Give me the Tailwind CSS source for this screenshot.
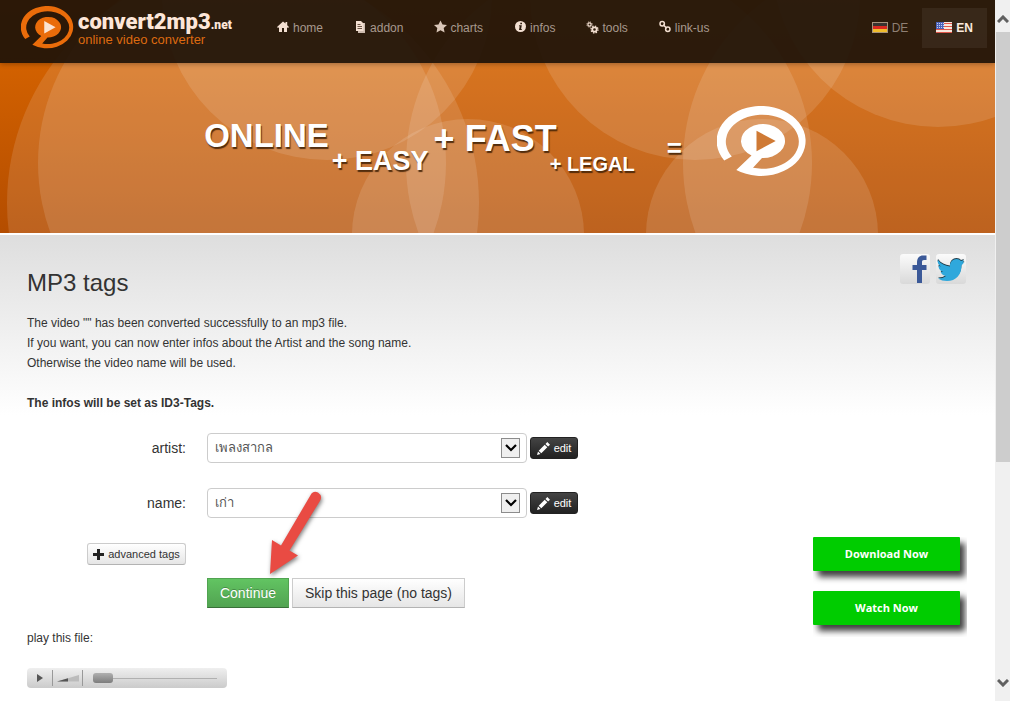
<!DOCTYPE html>
<html lang="en">

<head>
    <meta charset="UTF-8" />
    <meta name="viewport" content="width=device-width, initial-scale=1.0" />
    <title>convert2mp3.net - online video converter</title>
    <script src="https://cdn.jsdelivr.net/npm/@tailwindcss/browser@4"></script>
</head>

<body class="flex min-h-screen bg-white font-['Liberation_Sans',Arial,sans-serif] text-xs leading-5 text-[#333]">
    <!-- shared logo shapes -->
    <svg class="hidden">
        <symbol id="logo" viewBox="0 0 90 71" preserveAspectRatio="none">
            <path d="M7.2 54.5A44.5 35 0 1 1 19.3 64L34.5 49.5A22 17 0 1 1 45 52L36 61.8A36.5 27 0 1 0 14.8 50.5Z" fill="currentColor" />
        </symbol>
    </svg>

    <div class="min-w-0 flex-1">
        <div class="relative overflow-hidden bg-linear-to-b from-[#de6900] to-[#b44d00]">
            <!-- bubbles behind header and banner -->
            <svg class="absolute left-0 top-0" width="1100" height="233" viewBox="0 0 1100 233" fill="#fff" fill-opacity=".12">
                <circle cx="243" cy="203" r="236" />
                <circle cx="242" cy="163" r="204" />
                <circle cx="327" cy="-5" r="165" />
                <circle cx="468" cy="235" r="116" />
                <circle cx="609" cy="163" r="203" />
                <circle cx="695" cy="-5" r="165" />
                <circle cx="762" cy="235" r="116" />
                <circle cx="886" cy="163" r="203" />
                <circle cx="938" cy="-39" r="166" />
            </svg>

            <header class="relative flex h-[63px] items-start bg-[#1c1108]/92 pl-[21px] pr-2 shadow-[0_1px_5px_rgba(0,0,0,0.3)]">
                <a href="#" class="mt-1.5 flex w-[212px] shrink-0 gap-1">
                    <svg class="h-[43px] w-[53px] shrink-0 text-[#ea6c0a]" viewBox="0 0 90 71" preserveAspectRatio="none">
                        <use href="#logo" width="90" height="71" />
                        <path d="M39.5 24.7L58.7 35L39.5 45.3Z" fill="#fbe3d2" />
                    </svg>
                    <span class="flex flex-col whitespace-nowrap pt-1">
                        <span class="font-[Roboto,'Liberation_Sans',sans-serif] text-[22px] leading-6 font-black text-[#fde6d8]">convert2mp3<span class="text-xs">.net</span></span>
                        <span class="text-[13px] leading-3 text-[#dd6a10]">online video converter</span>
                    </span>
                </a>

                <nav class="ml-11 flex gap-[31px] pt-[18px] text-[#a8998e]">
                    <a href="#" class="flex gap-0.5">
                        <svg class="mt-px size-3.5" viewBox="0 0 14 14" fill="#f3dfd1"><path d="M6 2.5L0 8l1 1 1-.8V13h3V9h2v4h3V8.2l1 .8 1-1-1.8-1.700V3H8.500v1.500z" /></svg>
                        home
                    </a>
                    <a href="#" class="flex gap-0.5">
                        <svg class="mt-0.5 size-3.5" viewBox="0 0 14 14"><path d="M4 3h7v10H4z" fill="#cdbbae" /><path d="M2 1h5l2.500 2.500V11H2z" fill="#f3dfd1" /><path d="M3.500 4.500h3M3.500 6.500h4.500M3.500 8.500h4.500" stroke="#6b5545" /></svg>
                        addon
                    </a>
                    <a href="#" class="flex gap-0.5">
                        <svg class="mt-0.5 size-3.5" viewBox="0 0 14 14" fill="#d9c6b8"><path d="M6.500.5l2 4 4.500.6-3.300 3 .9 4.400-4.100-2.200-4 2.200.8-4.400L0 5.100l4.500-.6z" /></svg>
                        charts
                    </a>
                    <a href="#" class="flex gap-0.5">
                        <svg class="mt-0.5 size-3.5" viewBox="0 0 14 14"><circle cx="6.500" cy="6.500" r="5.500" fill="#f3dfd1" /><path d="M6.300 2.800h1.700v1.500H6.300zM5.200 5.300h2.600L7.100 9h.7v1H5l.7-3.700h-.8z" fill="#2d1c0e" /></svg>
                        infos
                    </a>
                    <a href="#" class="flex gap-0.5">
                        <svg class="mt-0.5 size-3.5" viewBox="0 0 14 14" fill="none" stroke="#f3dfd1">
                            <circle cx="3.500" cy="4.500" r="1.600" stroke-width="1.200" />
                            <circle cx="3.500" cy="4.500" r="2.600" stroke-dasharray="1 1.050" />
                            <circle cx="8.500" cy="9.500" r="2.200" stroke-width="1.800" />
                            <circle cx="8.500" cy="9.500" r="3.500" stroke-width="1.300" stroke-dasharray="1.400 1.350" />
                        </svg>
                        tools
                    </a>
                    <a href="#" class="flex gap-0.5">
                        <svg class="mt-0.5 size-3.5" viewBox="0 0 14 14" fill="none" stroke="#f3dfd1" stroke-width="1.500"><circle cx="3.200" cy="3.700" r="2.200" /><circle cx="8.800" cy="9.300" r="2.200" /><path d="M4.200 4.700l3.600 3.600" /></svg>
                        link-us
                    </a>
                </nav>

                <div class="ml-auto flex pt-2 text-[#8f7f73]">
                    <a href="#" class="flex h-10 items-center gap-1 px-3.5">
                        <svg class="-mt-0.5 h-[11px] w-4" viewBox="0 0 16 11"><path d="M0 0h16v11H0z" fill="#a8937c" /><path d="M1 1h14v3H1z" fill="#3a3430" /><path d="M1 4h14v3H1z" fill="#dc2a20" /><path d="M1 7h14v3H1z" fill="#f2bd2c" /></svg>
                        DE
                    </a>
                    <a href="#" class="flex h-10 items-center gap-1 bg-white/6 px-3.5 font-bold text-[#fbeade]">
                        <svg class="-mt-0.5 h-[11px] w-4" viewBox="0 0 16 11"><path d="M0 0h16v11H0z" fill="#f6e6dc" /><path d="M0 1.500h16M0 4.500h16M0 7.500h16M0 10.500h16" stroke="#e0564a" /><path d="M0 0h8v7H0z" fill="#4a62b8" /><path d="M1 1.500h7M1 3.500h7M1 5.500h7" stroke="#c5cdee" stroke-dasharray="1 1" /></svg>
                        EN
                    </a>
                </div>
            </header>

            <div class="relative flex h-[170px] items-start justify-center pl-4 pt-[43px] leading-none font-bold whitespace-nowrap text-white [text-shadow:1px_2px_1px_rgba(60,30,5,0.85)]">
                <span class="mt-[13px] text-[33px] leading-none">ONLINE</span>
                <span class="ml-[3px] mt-[42px] text-[27px] leading-none">+ EASY</span>
                <span class="ml-[5px] mt-[15px] text-[36px] leading-none">+ FAST</span>
                <span class="-ml-[7px] mt-12 text-[20px] leading-none">+ LEGAL</span>
                <span class="ml-8 mt-[29px] text-[26px] leading-none">=</span>
                <svg class="ml-[35px] h-[71px] w-[90px]" viewBox="0 0 90 71">
                    <use href="#logo" width="90" height="71" />
                    <path d="M39.500 24.700L58.700 35L39.500 45.300Z" fill="#cf7a35" />
                </svg>
            </div>
        </div>

        <main class="flex justify-between border-t-2 border-white bg-linear-to-b from-[#dedede] to-white to-[180px] pb-3 pl-[27px] pr-7">
            <div class="pt-7">
                <h1 class="text-2xl leading-10">MP3 tags</h1>
                <p class="mt-2.5">
                    The video "" has been converted successfully to an mp3 file.<br />
                    If you want, you can now enter infos about the Artist and the song name.<br />
                    Otherwise the video name will be used.
                </p>
                <p class="mt-5 font-bold">The infos will be set as ID3-Tags.</p>

                <form class="relative mt-5 text-sm">
                    <div class="flex items-center">
                        <label for="artist" class="mr-[21px] w-[159px] text-right">artist:</label>
                        <div class="relative">
                            <select id="artist" class="block h-[30px] w-80 appearance-none rounded border border-[#ccc] bg-white px-[7px] text-[13px] text-[#555]">
                                <option>เพลงสากล</option>
                            </select>
                            <span class="pointer-events-none absolute right-[7px] top-[5px] flex h-5 w-[19px] items-center justify-center border border-[#8c8c8c] bg-[#efefef]">
                                <svg width="12" height="8" viewBox="0 0 12 8" fill="none" stroke="#000" stroke-width="2.200"><path d="M1 1l5 5 5-5" /></svg>
                            </span>
                        </div>
                        <button type="button" class="ml-[3px] flex h-[22px] w-12 items-center justify-center gap-1 rounded-[3px] border border-[#222] bg-linear-to-b from-[#444] to-[#222] text-[11px] leading-4 text-white">
                            <svg width="13" height="13" viewBox="0 0 13 13" fill="#fff"><path d="M0 13l1-3.500 2.500 2.500zM1.700 8.700l6-6 2.600 2.600-6 6zM8.500 1.900L10.300 0 13 2.700l-1.900 1.800z" /></svg>
                            edit
                        </button>
                    </div>

                    <div class="mt-[25px] flex items-center">
                        <label for="name" class="mr-[21px] w-[159px] text-right">name:</label>
                        <div class="relative">
                            <select id="name" class="block h-[30px] w-80 appearance-none rounded border border-[#ccc] bg-white px-[7px] text-[13px] text-[#555]">
                                <option>เก่า</option>
                            </select>
                            <span class="pointer-events-none absolute right-[7px] top-[5px] flex h-5 w-[19px] items-center justify-center border border-[#8c8c8c] bg-[#efefef]">
                                <svg width="12" height="8" viewBox="0 0 12 8" fill="none" stroke="#000" stroke-width="2.200"><path d="M1 1l5 5 5-5" /></svg>
                            </span>
                        </div>
                        <button type="button" class="ml-[3px] flex h-[22px] w-12 items-center justify-center gap-1 rounded-[3px] border border-[#222] bg-linear-to-b from-[#444] to-[#222] text-[11px] leading-4 text-white">
                            <svg width="13" height="13" viewBox="0 0 13 13" fill="#fff"><path d="M0 13l1-3.500 2.500 2.500zM1.700 8.700l6-6 2.600 2.600-6 6zM8.500 1.900L10.300 0 13 2.700l-1.900 1.800z" /></svg>
                            edit
                        </button>
                    </div>

                    <button type="button" class="ml-[60px] mt-[25px] flex h-[22px] w-[99px] items-center justify-center gap-1 rounded-[3px] border border-[#ccc] border-b-[#b3b3b3] bg-linear-to-b from-white to-[#e6e6e6] text-[11px] leading-4">
                        <svg width="11" height="11" viewBox="0 0 11 11" fill="#222"><path d="M4 0h3v4h4v3H7v4H4V7H0V4h4z" /></svg>
                        advanced tags
                    </button>

                    <div class="ml-[180px] mt-[13px] flex gap-[3px]">
                        <button type="submit" class="h-[30px] w-[82px] border border-[#51a351] border-b-[#387038] bg-linear-to-b from-[#62c462] to-[#51a351] text-white [text-shadow:0_-1px_0_rgba(0,0,0,0.25)]">Continue</button>
                        <button type="button" class="h-[30px] w-[173px] border border-[#ccc] border-b-[#b3b3b3] bg-linear-to-b from-white to-[#e6e6e6]">Skip this page (no tags)</button>
                    </div>

                    <!-- pointer to the continue button -->
                    <svg class="pointer-events-none absolute left-60 top-[55px] drop-shadow-[1px_2px_2px_rgba(0,0,0,0.5)]" width="60" height="92" viewBox="0 0 60 92" fill="#e94b43">
                        <path d="M44.500 5.500Q47 2.500 51 4.500Q55.500 7.500 53.500 12L22.500 62.500L31 67.500L3 86L5 52L14 57.500Z" />
                    </svg>
                </form>

                <p class="mt-5">play this file:</p>
                <div class="mt-5 flex h-5 w-[200px] items-center rounded bg-linear-to-b from-[#efefef] to-[#cbcbcb]">
                    <button type="button" aria-label="play" class="flex h-4 w-[26px] items-center justify-center border-r border-[#999]">
                        <svg width="6" height="8" viewBox="0 0 6 8" fill="#555"><path d="M0 0l6 4-6 4z" /></svg>
                    </button>
                    <button type="button" aria-label="volume" class="flex h-4 w-[30px] items-center justify-center border-r border-[#999]">
                        <svg width="22" height="7" viewBox="0 0 22 7"><path d="M0 6.500L22 0v6.500z" fill="#bbb" /><path d="M0 6.500L11 3.200v3.300z" fill="#555" /></svg>
                    </button>
                    <input type="range" aria-label="position" value="0" class="ml-2.5 h-2.5 w-[124px] appearance-none bg-[linear-gradient(#b0b0b0,#b0b0b0)] bg-size-[100%_1px] bg-center bg-no-repeat [&::-webkit-slider-thumb]:h-2.5 [&::-webkit-slider-thumb]:w-5 [&::-webkit-slider-thumb]:appearance-none [&::-webkit-slider-thumb]:rounded-[3px] [&::-webkit-slider-thumb]:bg-linear-to-b [&::-webkit-slider-thumb]:from-[#b0b0b0] [&::-webkit-slider-thumb]:to-[#7d7d7d]" />
                </div>
            </div>

            <div class="w-[154px] shrink-0 pt-[19px]">
                <div class="flex justify-end gap-1.5 pr-px">
                    <a href="#" aria-label="Facebook" class="size-[30px] rounded-[3px] bg-linear-to-b from-[#fbfbfb] to-[#d9d9d9]">
                        <svg viewBox="0 0 30 30" fill="#3b5998"><path d="M17 29V16h-4.500v-5H17V8.500C17 4 19.500 1.500 23 1.500h3.500V6H24c-1.500 0-2 .8-2 2.200V11h4.500v5H22v13z" /></svg>
                    </a>
                    <a href="#" aria-label="Twitter" class="size-[30px] rounded-[3px] bg-linear-to-b from-[#fbfbfb] to-[#d9d9d9]">
                        <svg viewBox="0 0 30 30">
                            <path d="M2 5c3 4 7 6 12 6.500C13.500 7 17 4 20.500 4c2 0 3.500.8 4.500 2l3-1-1.500 2.500L28.500 7l-3 3.500C25.500 20 20 26 11 26c-3.500 0-6.500-.8-9-2.500 3.500 0 6-.8 8-2.500-2.500-.2-4.500-1.800-5.300-4h2.500C4 16 2.500 13.500 2.500 10.800l2.500.7C2 9.500 1 7 2 5z" fill="#223c48" />
                            <path transform="translate(0 1)" d="M2 5c3 4 7 6 12 6.500C13.500 7 17 4 20.500 4c2 0 3.500.8 4.500 2l3-1-1.500 2.500L28.500 7l-3 3.500C25.500 20 20 26 11 26c-3.500 0-6.500-.8-9-2.500 3.500 0 6-.8 8-2.500-2.500-.2-4.500-1.800-5.300-4h2.500C4 16 2.500 13.500 2.500 10.800l2.500.7C2 9.500 1 7 2 5z" fill="#2fa8dc" />
                        </svg>
                    </a>
                </div>
                <div class="mt-[253px] flex flex-col gap-5 overflow-hidden pb-3 pr-[7px] font-['Open_Sans',sans-serif] text-[11px] font-bold text-white">
                    <button type="button" class="h-[34px] rounded-[1px] bg-[#00cc00] shadow-[5px_6px_6px_rgba(0,0,0,0.75)]">Download Now</button>
                    <button type="button" class="h-[34px] rounded-[1px] bg-[#00cc00] shadow-[5px_6px_6px_rgba(0,0,0,0.75)]">Watch Now</button>
                </div>
            </div>
        </main>
    </div>

    <!-- scroll bar -->
    <div class="flex w-[15px] shrink-0 flex-col items-center bg-[#f0f0f0]">
        <svg class="mb-[9px] mt-[15px]" width="12" height="8" viewBox="0 0 12 8" fill="none" stroke="#606060" stroke-width="3"><path d="M1 7l5-5 5 5" /></svg>
        <div class="ml-px h-[430px] w-3.5 bg-[#cdcdcd]"></div>
        <svg class="mb-3.5 mt-auto" width="12" height="8" viewBox="0 0 12 8" fill="none" stroke="#606060" stroke-width="3"><path d="M1 1l5 5 5-5" /></svg>
    </div>
</body>

</html>
